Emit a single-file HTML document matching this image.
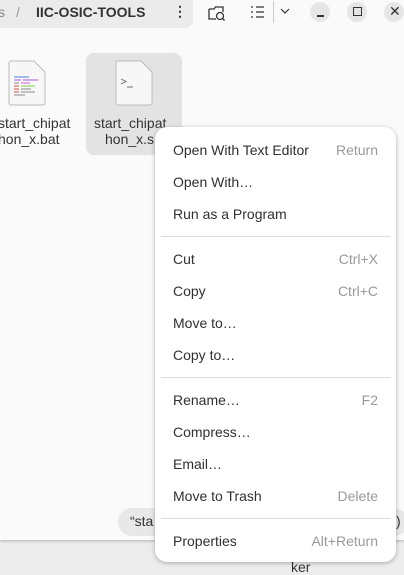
<html><head><style>
body{margin:0;width:404px;height:572px;overflow:hidden;background:#ececec;font-family:"Liberation Sans",sans-serif;position:relative}
.win{position:absolute;left:0;top:0;width:404px;height:540px;background:#fafafa;box-shadow:0 1px 3px rgba(0,0,0,.25)}
.path{position:absolute;left:-10px;top:-5px;width:203px;height:33px;background:#ebebeb;border-radius:8px}
.t{position:absolute;font-size:14px;color:#333;white-space:nowrap}
.menu{position:absolute;left:155px;top:127px;width:241px;height:435px;background:#fff;border-radius:12px;box-shadow:0 1px 4px rgba(0,0,0,.3)}
.it{position:absolute;left:18px;font-size:14px;color:#303030;margin-top:1px}
.sc{position:absolute;right:18px;font-size:14px;color:#999;margin-top:1px}
.sep{position:absolute;left:6px;right:6px;height:1px;background:#ddd}
.wb{position:absolute;top:2px;width:20px;height:20px;border-radius:50%;background:#e6e6e6}
</style></head><body>
<div class="win">
<div class="path"></div>
<div class="t" style="left:-2px;top:4px;color:#888">s</div>
<div class="t" style="left:16px;top:4px;color:#999">/</div>
<div class="t" style="left:36px;top:4px;font-weight:bold;color:#333">IIC-OSIC-TOOLS</div>
<div class="t" style="left:173px;top:3px;font-weight:bold">⋮</div>
<svg style="position:absolute;left:208px;top:4px" width="18" height="18" viewBox="0 0 18 18" fill="none" stroke="#333" stroke-width="1.3"><path d="M1 5h5l1.5-2H15v5M1 5v10h7"/><circle cx="12" cy="12" r="3.5"/><path d="M14.5 14.5l2 2"/></svg>
<svg style="position:absolute;left:250px;top:5px" width="16" height="14" viewBox="0 0 16 14" fill="none" stroke="#333" stroke-width="1.3"><path d="M1 2h2M6 2h8M1 7h2M6 7h8M1 12h2M6 12h8"/></svg>
<div style="position:absolute;left:273px;top:1px;width:1px;height:22px;background:#ccc"></div>
<svg style="position:absolute;left:280px;top:8px" width="10" height="6"><path d="M1 1l4 4 4-4" fill="none" stroke="#333" stroke-width="1.2"/></svg>
<div class="wb" style="left:310px"></div><div style="position:absolute;left:317px;top:15px;width:7px;height:1.5px;background:#333"></div>
<div class="wb" style="left:347px"></div><div style="position:absolute;left:353px;top:7px;width:7px;height:7px;border:1.3px solid #333"></div>
<div class="wb" style="left:384px"></div><div class="t" style="left:389px;top:3px;font-size:14px">✕</div>
<svg style="position:absolute;left:8px;top:60px" width="38" height="46" viewBox="0 0 38 46"><path d="M1 3a2 2 0 012-2h23l11 11v31a2 2 0 01-2 2H3a2 2 0 01-2-2z" fill="#f7f7f7" stroke="#bbb"/><path d="M6 17h15M6 20h7M15 20h15M6 23h5M13 23h9M6 26h5M13 26h14M6 29h5M13 29h10M6 32h5M13 32h14M6 35h11" stroke-width="1" stroke="#888"/><path d="M6 17h15" stroke="#4a7fe0"/><path d="M6 20h7M15 20h15" stroke="#a45ad8"/><path d="M13 23h9" stroke="#d85ad8"/><path d="M6 26h5M6 29h5M6 32h5" stroke="#e04848"/><path d="M13 26h14" stroke="#7bcf48"/></svg>
<div class="t" style="left:-2px;top:115px;color:#333">start_chipat</div>
<div class="t" style="left:-2px;top:131px;color:#333">hon_x.bat</div>
<div style="position:absolute;left:86px;top:53px;width:96px;height:102px;background:#e3e3e3;border-radius:8px"></div>
<svg style="position:absolute;left:115px;top:60px" width="38" height="46" viewBox="0 0 38 46"><path d="M1 3a2 2 0 012-2h23l11 11v31a2 2 0 01-2 2H3a2 2 0 01-2-2z" fill="#f7f7f7" stroke="#bbb"/><path d="M6 19l5 2.5-5 2.5M12 27h6" fill="none" stroke="#888" stroke-width="1.2"/></svg>
<div class="t" style="left:94px;top:115px">start_chipat</div>
<div class="t" style="left:105px;top:131px">hon_x.s</div>
<div style="position:absolute;left:118px;top:508px;width:290px;height:28px;background:#e8e8e8;border-radius:14px"></div>
<div class="t" style="left:130px;top:513px">“sta</div>
<div class="t" style="left:396px;top:513px">)</div>
</div>
<div class="t" style="left:291px;top:559px">ker</div>
<div class="menu">
<div class="it" style="top:14px">Open With Text Editor</div><div class="sc" style="top:14px">Return</div>
<div class="it" style="top:46px">Open With…</div>
<div class="it" style="top:78px">Run as a Program</div>
<div class="sep" style="top:109px"></div>
<div class="it" style="top:123px">Cut</div><div class="sc" style="top:123px">Ctrl+X</div>
<div class="it" style="top:155px">Copy</div><div class="sc" style="top:155px">Ctrl+C</div>
<div class="it" style="top:187px">Move to…</div>
<div class="it" style="top:219px">Copy to…</div>
<div class="sep" style="top:250px"></div>
<div class="it" style="top:264px">Rename…</div><div class="sc" style="top:264px">F2</div>
<div class="it" style="top:296px">Compress…</div>
<div class="it" style="top:328px">Email…</div>
<div class="it" style="top:360px">Move to Trash</div><div class="sc" style="top:360px">Delete</div>
<div class="sep" style="top:391px"></div>
<div class="it" style="top:405px">Properties</div><div class="sc" style="top:405px">Alt+Return</div>
</div>
</body></html>
